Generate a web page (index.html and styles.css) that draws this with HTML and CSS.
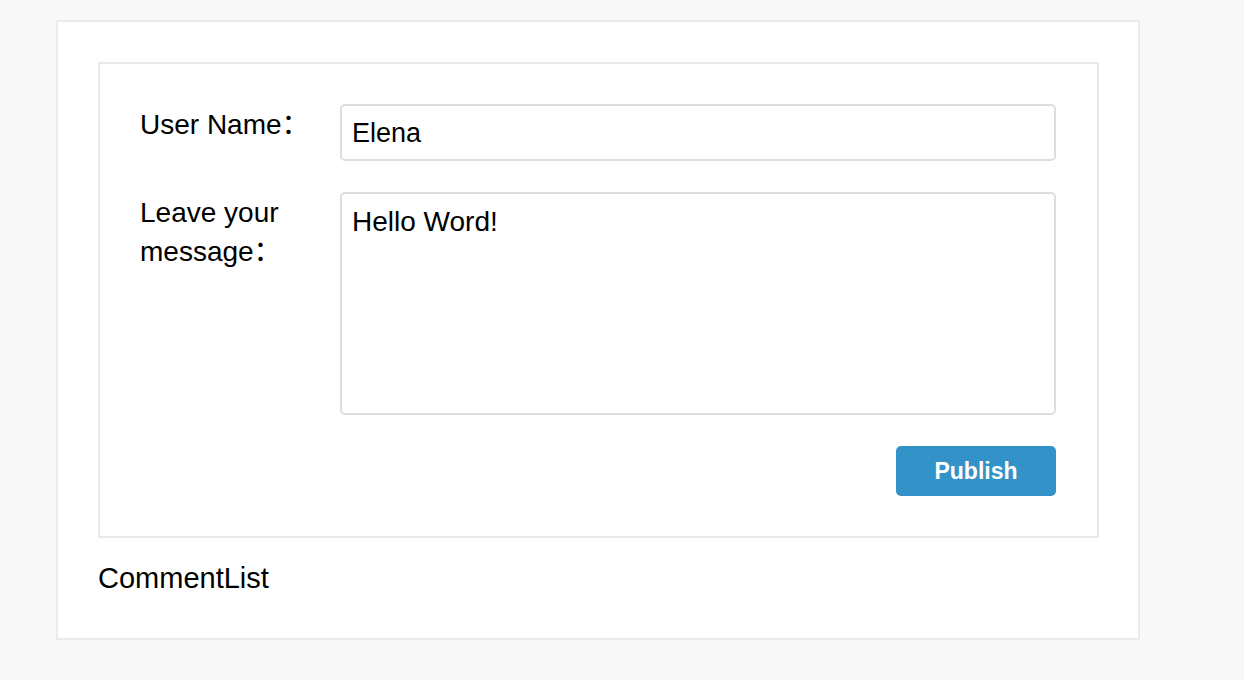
FILE: index.html
```html
<!DOCTYPE html>
<html>
<head>
<meta charset="utf-8">
<link rel="stylesheet" href="styles.css">
</head>
<body>
<div class="wrapper">
  <div class="form-box">
    <div class="row">
      <span class="label">User Name：</span>
      <div class="field"><input class="input" type="text" value="Elena"></div>
    </div>
    <div class="row">
      <span class="label">Leave your message：</span>
      <div class="field"><textarea class="textarea">Hello Word!</textarea></div>
    </div>
    <div class="actions">
      <button class="btn">Publish</button>
    </div>
  </div>
  <div class="comment-list">CommentList</div>
</div>
</body>
</html>
```
FILE: styles.css
```css
* { box-sizing: border-box; }
html, body { margin: 0; padding: 0; }
body {
  background: #f8f8f8;
  font-family: "Liberation Sans", "Noto Sans CJK SC", sans-serif;
  color: #000;
  padding: 20px 0 0 56px;
}
.wrapper {
  width: 1084px;
  background: #fff;
  border: 2px solid #ebebeb;
  padding: 40px;
}
.form-box {
  width: 1001px;
  border: 2px solid #e8e8e8;
  padding: 40px 41px 40px 40px;
  display: flex;
  flex-direction: column;
  gap: 31px;
}
.row {
  display: flex;
  align-items: flex-start;
}
.label {
  width: 200px;
  flex: none;
  font-size: 28px;
  line-height: 39px;
  padding-right: 12px;
  padding-top: 1px;
}
.field { flex: 1; }
.input, .textarea {
  display: block;
  width: 100%;
  border: 2px solid #dddddd;
  border-radius: 5px;
  font-family: "Liberation Sans", "Noto Sans CJK SC", sans-serif;
  color: #000;
  padding: 0 10px;
  outline: none;
  background: #fff;
}
.input { height: 57px; font-size: 27px; padding-top: 2px; }
.textarea {
  height: 223px;
  resize: none;
  padding-top: 9px;
  font-size: 28px;
  line-height: 38px;
}
.actions {
  display: flex;
  justify-content: flex-end;
}
.btn {
  width: 160px;
  height: 50px;
  border: none;
  border-radius: 5px;
  background: #3393c8;
  color: #fff;
  font-family: "Liberation Sans", sans-serif;
  font-size: 23px;
  font-weight: bold;
  padding-top: 2px;
}
.comment-list {
  margin-top: 20px;
  font-size: 29px;
  line-height: 40px;
}
```
